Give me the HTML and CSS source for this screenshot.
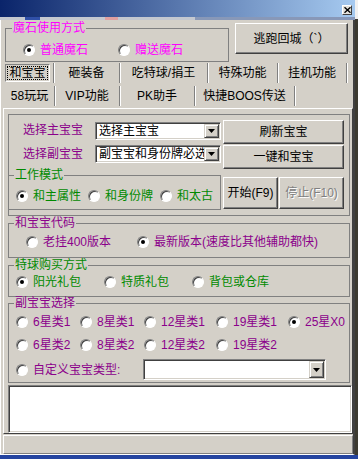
FILE: index.html
```html
<!DOCTYPE html>
<html>
  <head>
    <meta charset="UTF-8" />
    <title>和宝宝</title>
    <link rel="stylesheet" href="styles.css">
  </head>
  <body>
    <div class="window">
      <div class="titlebar">
        <span class="close-btn" aria-label="关闭">
          <svg width="7" height="6" viewBox="0 0 7 6"><path d="M0.5 0.3l6 5.4M6.5 0.3l-6 5.4" stroke="#000" stroke-width="1.4" fill="none"/></svg>
        </span>
      </div>
      <div class="title-strip"></div>

      <div class="client">
        <div class="top-row">
          <fieldset class="group group-magic">
            <legend class="c-magenta">魔石使用方式</legend>
            <div class="opts opts-magic c-magenta">
              <label class="opt"><span class="radio on"></span>普通魔石</label>
              <label class="opt"><span class="radio"></span>赠送魔石</label>
            </div>
          </fieldset>
          <button class="btn btn-escape">逃跑回城（`）</button>
        </div>

        <div class="tabs">
          <div class="tab-row tab-row-1">
            <div class="tab sel"><span class="tab-face">和宝宝</span></div>
            <div class="tab">砸装备</div>
            <div class="tab">吃特球/捐王</div>
            <div class="tab">特殊功能</div>
            <div class="tab">挂机功能</div>
          </div>
          <div class="tab-row tab-row-2">
            <div class="tab">58玩玩</div>
            <div class="tab">VIP功能</div>
            <div class="tab">PK助手</div>
            <div class="tab">快捷BOOS传送</div>
          </div>
        </div>

        <div class="page">
          <div class="box-pick">
            <div class="pick-grid">
              <span class="pick-label pick-label-1 c-purple">选择主宝宝</span>
              <div class="combo combo-main">
                <span class="combo-text">选择主宝宝</span>
                <span class="combo-arrow"><svg width="7" height="4" viewBox="0 0 7 4"><path d="M0 0h7L3.5 4z" fill="#000"/></svg></span>
              </div>
              <button class="btn btn-wide">刷新宝宝</button>

              <span class="pick-label pick-label-2 c-purple">选择副宝宝</span>
              <div class="combo combo-sub">
                <span class="combo-text">副宝宝和身份牌必选</span>
                <span class="combo-arrow"><svg width="7" height="4" viewBox="0 0 7 4"><path d="M0 0h7L3.5 4z" fill="#000"/></svg></span>
              </div>
              <button class="btn btn-wide">一键和宝宝</button>
            </div>

            <div class="mode-row">
              <fieldset class="group group-mode">
                <legend class="c-green">工作模式</legend>
                <div class="opts opts-mode c-green">
                  <label class="opt"><span class="radio on"></span>和主属性</label>
                  <label class="opt"><span class="radio"></span>和身份牌</label>
                  <label class="opt"><span class="radio"></span>和太古</label>
                </div>
              </fieldset>
              <button class="btn btn-start">开始(F9)</button>
              <button class="btn btn-stop" disabled>停止(F10)</button>
            </div>
          </div>

          <fieldset class="group group-code">
            <legend class="c-purple">和宝宝代码</legend>
            <div class="opts opts-code c-purple">
              <label class="opt"><span class="radio"></span>老挂400版本</label>
              <label class="opt"><span class="radio on"></span>最新版本(速度比其他辅助都快)</label>
            </div>
          </fieldset>

          <fieldset class="group group-buy">
            <legend class="c-green">特球购买方式</legend>
            <div class="opts opts-buy c-green">
              <label class="opt"><span class="radio on"></span>阳光礼包</label>
              <label class="opt"><span class="radio"></span>特质礼包</label>
              <label class="opt"><span class="radio"></span>背包或仓库</label>
            </div>
          </fieldset>

          <fieldset class="group group-sub">
            <legend class="c-purple">副宝宝选择</legend>
            <div class="opts opts-sub c-purple">
              <label class="opt"><span class="radio"></span>6星类1</label>
              <label class="opt"><span class="radio"></span>8星类1</label>
              <label class="opt"><span class="radio"></span>12星类1</label>
              <label class="opt"><span class="radio"></span>19星类1</label>
              <label class="opt"><span class="radio on"></span>25星X0</label>
            </div>
            <div class="opts opts-sub opts-sub-2 c-purple">
              <label class="opt"><span class="radio"></span>6星类2</label>
              <label class="opt"><span class="radio"></span>8星类2</label>
              <label class="opt"><span class="radio"></span>12星类2</label>
              <label class="opt"><span class="radio"></span>19星类2</label>
            </div>
            <div class="custom-row c-purple">
              <label class="opt opt-custom"><span class="radio"></span>自定义宝宝类型:</label>
              <div class="combo combo-custom">
                <span class="combo-text"></span>
                <span class="combo-arrow"><svg width="7" height="4" viewBox="0 0 7 4"><path d="M0 0h7L3.5 4z" fill="#000"/></svg></span>
              </div>
            </div>
          </fieldset>

          <div class="log" tabindex="0"></div>
        </div>

        <div class="statusbar"></div>
      </div>
    </div>
  </body>
</html>
```

FILE: styles.css
```css
:root {
  --face: #d4d0c8;
  --shadow: #808080;
  --dark: #404040;
  --light: #ffffff;
  --magenta: #ff00ff;
  --purple: #8b008b;
  --green: #008a00;
}

body {
  margin: 0;
  width: 358px;
  height: 459px;
  overflow: hidden;
  font-family: "Liberation Sans", "Noto Sans CJK SC", sans-serif;
  font-size: 12px;
  line-height: 14px;
  color: #000;
  background: linear-gradient(#f0f0f0 0 19px, #3c3a30 19px 455px, #2444a0 455px);
}

.window {
  width: 355px;
  height: 455px;
  display: flex;
  flex-direction: column;
  background-color: var(--face);
}

/* Title bar */
.titlebar {
  height: 17px;
  display: flex;
  justify-content: flex-end;
  align-items: flex-start;
  background: linear-gradient(to right, #0a246a, #a6caf0);
}

.close-btn {
  width: 10px;
  height: 10px;
  box-sizing: border-box;
  margin: 5px 3px 0 0;
  display: flex;
  align-items: center;
  justify-content: center;
  background-color: #e4e2dc;
  border: 1px solid;
  border-color: var(--light) var(--dark) var(--dark) var(--light);
}

.title-strip {
  height: 3px;
  background: linear-gradient(to right,
    #c4c8d0 0 25px, #3050a8 25px 40px, #c4c8d0 40px 105px,
    #e0a0a0 105px 118px, #c4c8d0 118px 195px, #8898b8 195px);
}

.client {
  flex: 1;
  display: flex;
  flex-direction: column;
  border-left: 1px solid var(--light);
  border-right: 2px solid var(--dark);
  border-bottom: 1px solid var(--light);
}

/* Colours */
.c-magenta { color: var(--magenta); }
.c-purple { color: var(--purple); }
.c-green { color: var(--green); }

/* Group boxes */
.group {
  margin: 0;
  padding: 0;
  min-width: 0;
  box-sizing: border-box;
  border: 1px solid var(--shadow);
}

.group > legend {
  margin-left: 5px;
  padding: 0 1px;
  line-height: 13px;
  font-size: 12px;
}

.opts {
  display: grid;
  align-items: center;
}

.opt {
  display: flex;
  align-items: center;
  gap: 5px;
  height: 14px;
  line-height: 14px;
  white-space: nowrap;
}

.radio {
  position: relative;
  flex: none;
  width: 12px;
  height: 12px;
  box-sizing: border-box;
  border-radius: 50%;
  background-color: #fff;
  border: 1px solid;
  border-color: var(--shadow) var(--light) var(--light) var(--shadow);
  box-shadow: inset 1px 1px var(--dark);
}

.radio.on::after {
  content: '';
  position: absolute;
  left: 3px;
  top: 3px;
  width: 4px;
  height: 4px;
  border-radius: 50%;
  background-color: #000;
}

/* Buttons */
.btn {
  font: inherit;
  color: #000;
  padding: 0;
  box-sizing: border-box;
  background-color: var(--face);
  border: 1px solid;
  border-color: var(--light) var(--dark) var(--dark) var(--light);
  box-shadow: inset -1px -1px var(--shadow);
}

.btn-stop {
  color: var(--shadow);
  text-shadow: 1px 1px 0 var(--light);
}

/* Top row */
.top-row {
  display: flex;
  align-items: flex-start;
  gap: 6px;
  margin: 2px 0 0 4px;
}

.group-magic {
  width: 224px;
  height: 40px;
}

.group-magic > legend {
  margin-left: 6px;
}

.opts-magic {
  grid-template-columns: 95px auto;
  padding: 8px 0 0 17px;
}

.btn-escape {
  width: 113px;
  height: 31px;
  margin-top: 1px;
}

/* Tabs */
.tabs {
  display: flex;
  flex-direction: column;
  gap: 3px;
  margin: 1px 0 0 4px;
  padding-bottom: 1px;
}

.tab-row {
  display: flex;
  height: 20px;
}

.tab {
  height: 20px;
  box-sizing: border-box;
  display: flex;
  align-items: center;
  justify-content: center;
  white-space: nowrap;
  border-right: 1px solid var(--shadow);
  box-shadow: 1px 0 var(--light);
}

.tab.sel {
  justify-content: flex-start;
}

.tab-face {
  width: 45px;
  height: 18px;
  box-sizing: border-box;
  display: flex;
  align-items: center;
  justify-content: center;
  border: 1px solid;
  border-color: var(--shadow) var(--light) var(--light) var(--shadow);
  outline: 1px dotted #000;
  outline-offset: -3px;
}

.tab-row-1 .tab:nth-child(1) { width: 49px; }
.tab-row-1 .tab:nth-child(2) { width: 66px; }
.tab-row-1 .tab:nth-child(3) { width: 88px; }
.tab-row-1 .tab:nth-child(4) { width: 70px; }
.tab-row-1 .tab:nth-child(5) { width: 69px; }

.tab-row-2 .tab:nth-child(1) { width: 50px; }
.tab-row-2 .tab:nth-child(2) { width: 65px; }
.tab-row-2 .tab:nth-child(3) { width: 75px; }
.tab-row-2 .tab:nth-child(4) { width: 100px; }

/* Tab page */
.page {
  width: 350px;
  height: 326px;
  box-sizing: border-box;
  margin: 1px 0 0 2px;
  padding: 5px 0 0 4px;
  border: 1px solid;
  border-color: var(--light) var(--dark) var(--dark) var(--light);
  display: flex;
  flex-direction: column;
}

.box-pick {
  width: 342px;
  height: 102px;
  box-sizing: border-box;
  padding-top: 5px;
  border: 1px solid var(--shadow);
}

.pick-grid {
  display: grid;
  grid-template-columns: 86px 126px 123px;
  grid-template-rows: 25px 24px;
}

.pick-label {
  padding-left: 14px;
  white-space: nowrap;
}

.pick-label-1 { margin-top: 3px; }
.pick-label-2 { margin-top: 2px; }

.combo {
  display: flex;
  align-items: stretch;
  box-sizing: border-box;
  padding: 1px;
  background-color: #fff;
  border: 1px solid;
  border-color: var(--shadow) var(--light) var(--light) var(--shadow);
  box-shadow: inset 1px 1px var(--dark), inset -1px -1px var(--face);
}

.combo-main,
.combo-sub {
  height: 18px;
}

.combo-main { margin-top: 2px; }

.combo-text {
  flex: 1;
  overflow: hidden;
  white-space: nowrap;
  padding-left: 2px;
  line-height: 14px;
}

.combo-arrow {
  flex: none;
  width: 15px;
  box-sizing: border-box;
  display: flex;
  align-items: center;
  justify-content: center;
  background-color: var(--face);
  border: 1px solid;
  border-color: var(--face) var(--dark) var(--dark) var(--face);
  box-shadow: inset 1px 1px var(--light), inset -1px -1px var(--shadow);
}

.btn-wide {
  width: 121px;
  height: 24px;
  justify-self: end;
}

.mode-row {
  display: flex;
  align-items: flex-start;
}

.group-mode {
  width: 213px;
  height: 41px;
  margin-left: -1px;
}

.opts-mode {
  grid-template-columns: 72px 72px auto;
  padding: 7px 0 0 7px;
}

.btn-start {
  width: 55px;
  height: 32px;
  margin: 8px 0 0 2px;
}

.btn-stop {
  width: 65px;
  height: 32px;
  margin: 8px 0 0 1px;
}

/* Lower groups */
.group-code,
.group-buy,
.group-sub {
  width: 342px;
}

.group-code {
  height: 41px;
  margin-top: 1px;
}

.opts-code {
  grid-template-columns: 111px auto;
  padding: 5px 0 0 17px;
}

.group-buy {
  height: 38px;
  margin-top: 1px;
}

.opts-buy {
  grid-template-columns: 88px 88px auto;
  padding: 3px 0 0 7px;
}

.group-sub {
  height: 86px;
}

.opts-sub {
  grid-template-columns: 64px 64px 72px 72px auto;
  padding: 5px 0 0 7px;
}

.opts-sub-2 {
  padding-top: 9px;
}

.custom-row {
  display: flex;
  align-items: center;
  height: 21px;
  margin-top: 7px;
  padding-left: 7px;
}

.opt-custom {
  width: 127px;
}

.combo-custom {
  width: 183px;
  height: 21px;
}

.log {
  width: 344px;
  height: 48px;
  box-sizing: border-box;
  margin-top: 2px;
  background-color: #fff;
  border: 1px solid;
  border-color: var(--shadow) var(--light) var(--light) var(--shadow);
  box-shadow: inset 1px 1px var(--dark), inset -1px -1px var(--face);
  outline: none;
}

.statusbar {
  width: 350px;
  height: 19px;
  box-sizing: border-box;
  margin: 1px 0 0 2px;
  border: 1px solid;
  border-color: var(--light) var(--shadow) var(--shadow) var(--light);
}
```
